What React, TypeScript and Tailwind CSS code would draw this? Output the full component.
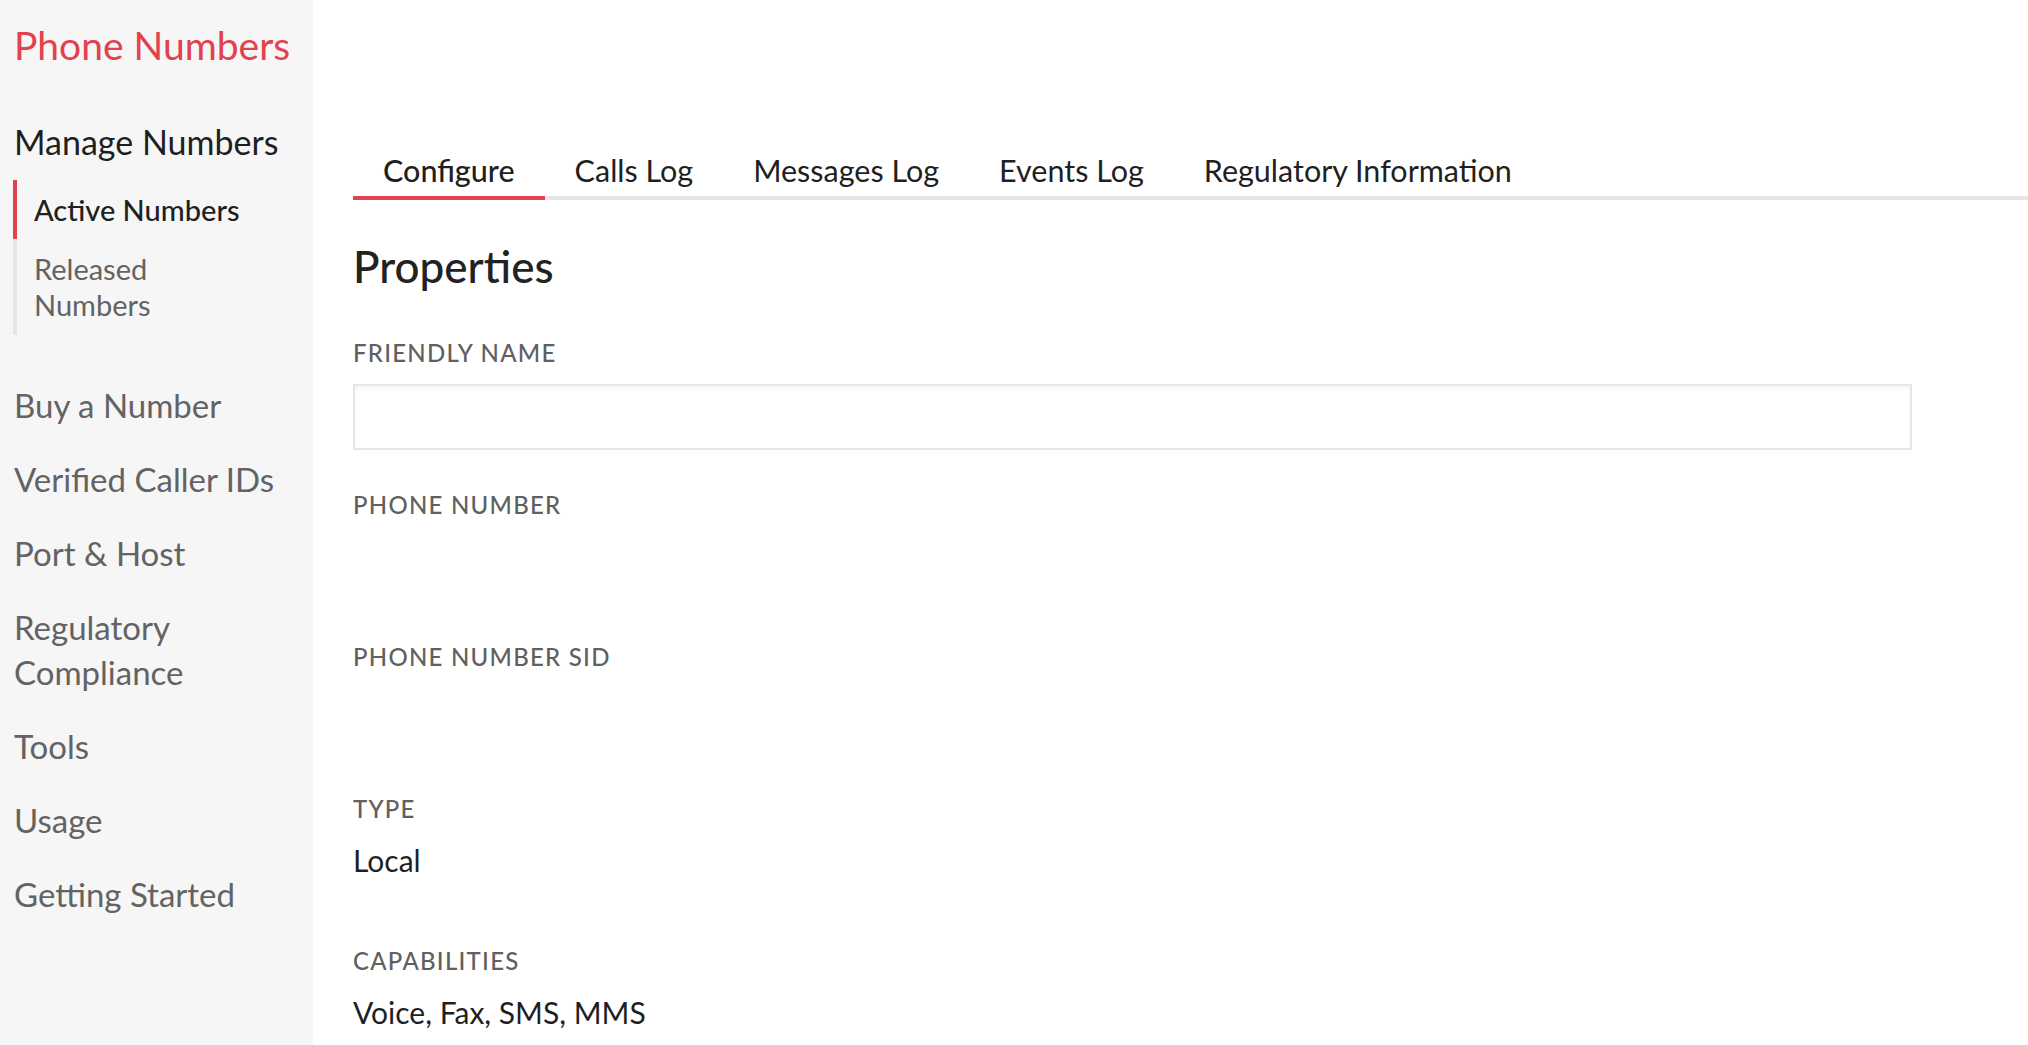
import React from "react";

const font = { fontFamily: "Lato, 'Open Sans', sans-serif" };

function Field({ label, last, children }: { label: string; last?: boolean; children?: React.ReactNode }) {
  return (
    <div className={last ? "" : "mb-[41px]"}>
      <div className="text-[24px] leading-[28px] tracking-[1.25px] text-[#606060] font-medium">{label}</div>
      <div className="mt-[17px] h-[66px]">{children}</div>
    </div>
  );
}

export default function App() {
  const tabs = ["Configure", "Calls Log", "Messages Log", "Events Log", "Regulatory Information"];
  const items: string[][] = [
    ["Buy a Number"],
    ["Verified Caller IDs"],
    ["Port & Host"],
    ["Regulatory", "Compliance"],
    ["Tools"],
    ["Usage"],
    ["Getting Started"],
  ];
  return (
    <div className="flex h-[1045px] w-full overflow-hidden bg-white" style={font}>
      <aside className="w-[313px] shrink-0 bg-[#f6f6f6] pl-[14px]">
        <div className="mt-[22px] text-[39px] leading-[46px] text-[#e1424e]">Phone Numbers</div>
        <div className="mt-[54px] text-[34px] leading-[40px] text-[#1f1f1f]">Manage Numbers</div>
        <div className="mt-[18px] ml-[-1px] border-l-4 border-[#e6e6e6]">
          <div className="-ml-[4px] border-l-4 border-[#e1424e] py-[12px] pl-[17px] text-[29px] leading-[35px] font-medium text-[#1f1f1f]">
            Active Numbers
          </div>
          <div className="py-[12px] pl-[17px] text-[29px] leading-[36px] text-[#636363]">
            Released
            <br />
            Numbers
          </div>
        </div>
        <div className="mt-[48px] flex flex-col gap-[29px] text-[33px] leading-[45px] text-[#636363]">
          {items.map((lines) => (
            <div key={lines.join(" ")}>
              {lines.map((l, i) => (
                <React.Fragment key={l}>
                  {i > 0 && <br />}
                  {l}
                </React.Fragment>
              ))}
            </div>
          ))}
        </div>
      </aside>
      <main className="flex-1 pl-[40px]">
        <div className="mt-[152px] flex border-b-4 border-[#e6e6e6]">
          {tabs.map((t, i) => (
            <div
              key={t}
              className={
                i === 0
                  ? "-mb-[4px] border-b-4 border-[#e1424e] px-[30px] pb-[8px] text-[30.5px] leading-[36px] font-medium text-[#1f1f1f]"
                  : "px-[30px] pb-[8px] text-[30.5px] leading-[36px] text-[#1f1f1f]"
              }
            >
              {t}
            </div>
          ))}
        </div>
        <h1 className="mt-[41px] text-[44px] leading-[50px] font-medium text-[#222]">Properties</h1>
        <div className="mt-[48px]">
          <Field label="FRIENDLY NAME">
            <div className="h-[66px] w-[1559px] border-2 border-[#e6e6e6] shadow-[inset_0_3px_4px_rgba(0,0,0,0.04)]" />
          </Field>
          <Field label="PHONE NUMBER" />
          <Field label="PHONE NUMBER SID" />
          <Field label="TYPE">
            <div className="text-[30px] leading-[40px] text-[#1f1f1f]">Local</div>
          </Field>
          <Field label="CAPABILITIES" last>
            <div className="text-[30px] leading-[40px] text-[#1f1f1f]">Voice, Fax, SMS, MMS</div>
          </Field>
        </div>
      </main>
    </div>
  );
}
